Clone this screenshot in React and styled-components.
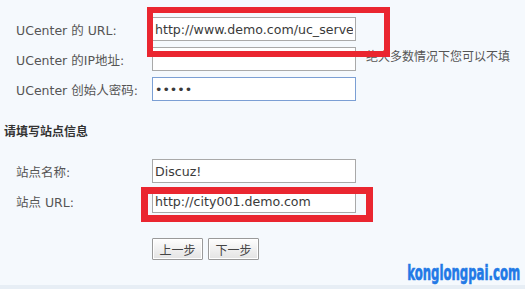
import React from "react";
import styled, { createGlobalStyle } from "styled-components";

const Global = createGlobalStyle`
  html, body { margin: 0; padding: 0; background: #f5f9fd; }
  body { width: 525px; height: 289px; overflow: hidden; font-family: "DejaVu Sans", "Noto Sans CJK SC", sans-serif; }
`;

const Page = styled.div`
  position: relative;
  width: 525px;
  height: 289px;
  background: #f5f9fd;
  overflow: hidden;
`;

const FormBlock = styled.div`
  display: grid;
  grid-template-columns: 136px 204px auto;
  grid-auto-rows: 24px;
  row-gap: 6px;
  padding: ${(p) => p.$pad};
  align-items: center;
`;

const Label = styled.div`
  font-size: 12.5px;
  color: #555;
  white-space: nowrap;
`;

const Input = styled.input`
  box-sizing: border-box;
  width: 204px;
  height: 24px;
  margin: 0;
  padding: 0 2px;
  border: 1px solid ${(p) => (p.$focus ? "#7b9fd4" : "#a9a9a9")};
  background: #fff;
  font-family: "DejaVu Sans", sans-serif;
  font-size: 12.6px;
  color: #3a3a3a;
  outline: none;
`;

const Hint = styled.div`
  font-size: 12px;
  color: #555;
  padding-left: 10px;
  white-space: nowrap;
  padding-bottom: 7px;
`;

const Section = styled.div`
  padding: 0 0 0 4px;
  margin-top: 21px;
  font-size: 12px;
  font-weight: bold;
  color: #333;
  height: 20px;
  line-height: 20px;
`;

const Buttons = styled.div`
  display: flex;
  gap: 5px;
  padding: 25px 0 0 152px;
`;

const Button = styled.button`
  box-sizing: border-box;
  width: 51px;
  height: 22px;
  margin: 0;
  padding: 0;
  border: 1px solid #9a9a9a;
  background: linear-gradient(#fefefe, #e3e3e3);
  font-family: "Noto Sans CJK SC", sans-serif;
  font-size: 12px;
  color: #444;
  border-radius: 1px;
  box-shadow: inset 0 0 0 1px #fff;
`;

const Highlight = styled.div`
  position: absolute;
  box-sizing: border-box;
  border: ${(p) => p.$w}px solid #ea2630;
  pointer-events: none;
`;

const Footer = styled.div`
  position: absolute;
  left: 0;
  right: 0;
  bottom: 0;
  height: 4px;
  background: #e7eef5;
`;

const Watermark = styled.div`
  position: absolute;
  right: 5px;
  bottom: 4px;
  font-family: "Liberation Sans Narrow", "DejaVu Sans Condensed", sans-serif;
  font-weight: bold;
  font-size: 21px;
  line-height: 24px;
  color: #2279e6;
  transform: scaleX(0.62);
  transform-origin: right center;
  -webkit-text-stroke: 0.6px #2279e6;
`;

export default function App() {
  return (
    <Page>
      <Global />
      <FormBlock $pad="17px 0 0 16px">
        <Label>UCenter 的 URL:</Label>
        <Input defaultValue="http://www.demo.com/uc_server" readOnly />
        <span />
        <Label>UCenter 的IP地址:</Label>
        <Input defaultValue="" readOnly />
        <Hint>绝大多数情况下您可以不填</Hint>
        <Label>UCenter 创始人密码:</Label>
        <Input type="password" defaultValue="12345" $focus readOnly />
        <span />
      </FormBlock>
      <Section>请填写站点信息</Section>
      <FormBlock $pad="17px 0 0 16px">
        <Label>站点名称:</Label>
        <Input defaultValue="Discuz!" readOnly />
        <span />
        <Label>站点 URL:</Label>
        <Input defaultValue="http://city001.demo.com" readOnly />
        <span />
      </FormBlock>
      <Buttons>
        <Button>上一步</Button>
        <Button>下一步</Button>
      </Buttons>
      <Highlight $w={6} style={{ left: 147, top: 7, width: 243, height: 50 }} />
      <Highlight $w={7} style={{ left: 141, top: 187, width: 232, height: 35 }} />
      <Watermark>konglongpai.com</Watermark>
      <Footer />
    </Page>
  );
}
